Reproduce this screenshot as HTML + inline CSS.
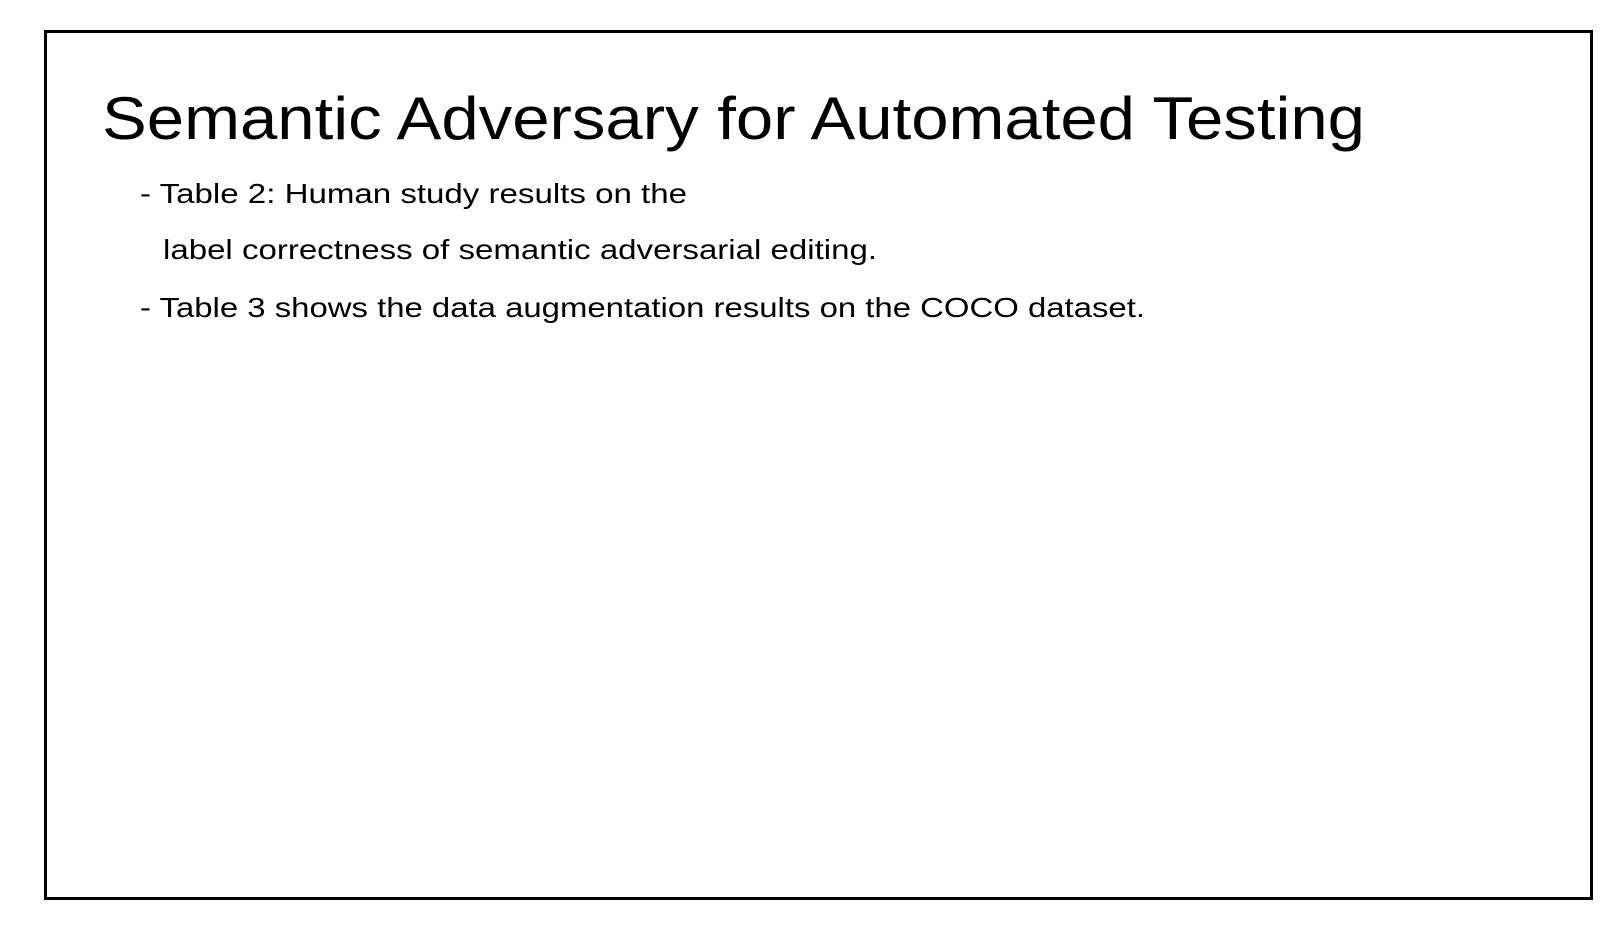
<!DOCTYPE html>
<html><head><meta charset="utf-8"><style>
html,body{margin:0;padding:0;background:#fff;width:1620px;height:944px;overflow:hidden}
svg{display:block}
text{font-family:"Liberation Sans",sans-serif;fill:#000}
</style></head><body>
<svg width="1620" height="944" viewBox="0 0 1620 944" xmlns="http://www.w3.org/2000/svg">
<rect x="0" y="0" width="1620" height="944" fill="#fff"/>
<rect x="45.5" y="31.5" width="1546" height="867" fill="none" stroke="#000" stroke-width="3"/>
<text x="102" y="139" font-size="60" textLength="1263" lengthAdjust="spacingAndGlyphs">Semantic Adversary for Automated Testing</text>
<text x="140" y="203" font-size="28" textLength="547" lengthAdjust="spacingAndGlyphs">- Table 2: Human study results on the</text>
<text x="163" y="259" font-size="28" textLength="714" lengthAdjust="spacingAndGlyphs">label correctness of semantic adversarial editing.</text>
<text x="140" y="317" font-size="28" textLength="1005" lengthAdjust="spacingAndGlyphs">- Table 3 shows the data augmentation results on the COCO dataset.</text>
</svg>
</body></html>
